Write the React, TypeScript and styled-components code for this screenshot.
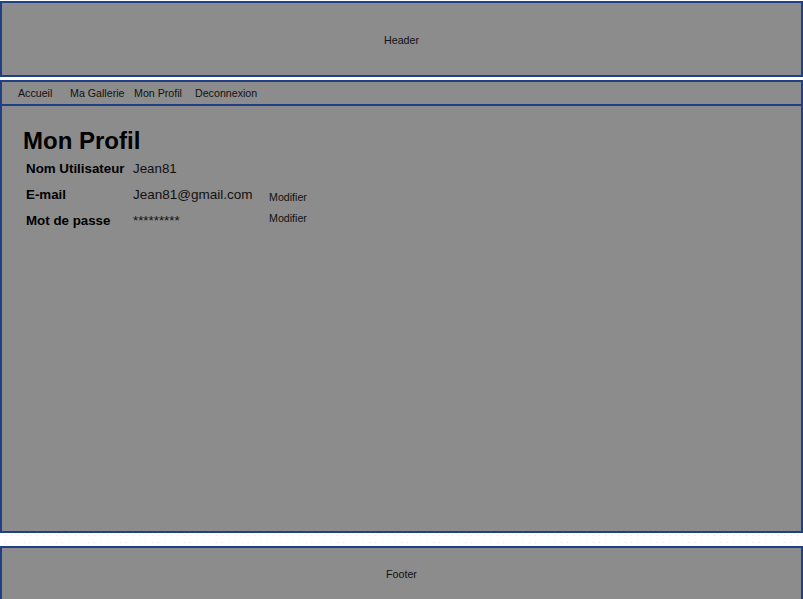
import React from 'react'
import styled, { createGlobalStyle } from 'styled-components'

const GlobalStyle = createGlobalStyle`
  html, body {
    margin: 0;
    padding: 0;
    background: #ffffff;
    font-family: "Liberation Sans", Arial, sans-serif;
  }
`

const Page = styled.div`
  width: 803px;
  padding-top: 1px;
  box-sizing: border-box;
`

const Box = styled.div`
  background: #8c8c8c;
  border: 2px solid #213f86;
  box-sizing: border-box;
  color: #111;
`

const Header = styled(Box)`
  height: 76px;
  display: flex;
  align-items: center;
  justify-content: center;
  padding-top: 2px;
  font-size: 10.67px;
`

const Nav = styled(Box)`
  margin-top: 3px;
  height: 24px;
  border-bottom: none;
  padding-left: 16px;
  display: grid;
  grid-template-columns: 52px 64px 61px auto;
  align-items: center;
  font-size: 10.67px;
  line-height: 22px;
`

const NavLink = styled.a`
  color: #111;
  text-decoration: none;
  white-space: nowrap;
  cursor: pointer;
`

const Main = styled(Box)`
  height: 429px;
  padding: 21px 21px 0;
`

const Title = styled.h1`
  margin: 0;
  font-size: 24px;
  line-height: 28px;
  font-weight: bold;
  color: #000;
`

const InfoGrid = styled.div`
  margin: 6px 0 0 3px;
  display: grid;
  grid-template-columns: 107px 136px auto;
  grid-template-rows: 26px 26px 16px;
  align-items: baseline;
  font-size: 13.33px;
  line-height: 16px;
`

const Label = styled.div`
  font-weight: bold;
  color: #000;
  white-space: nowrap;
`

const Value = styled.div<{ $wide?: boolean }>`
  color: #111;
  white-space: nowrap;
  font-size: ${p => (p.$wide ? '13.5px' : '13.33px')};
`

const Action = styled.a<{ $lift?: number }>`
  font-size: 10.67px;
  color: #111;
  text-decoration: none;
  cursor: pointer;
  position: relative;
  top: ${p => p.$lift ?? 0}px;
`

const Gap = styled.div`
  height: 13px;
  background-image: radial-gradient(circle, #e2e2e2 0.7px, transparent 0.9px);
  background-size: 6.4px 7px;
  background-position: 2px -1px;
`

const Footer = styled(Box)`
  height: 56px;
  display: flex;
  align-items: center;
  justify-content: center;
  font-size: 10.67px;
`

const App: React.FC = () => {
  return (
    <>
      <GlobalStyle />
      <Page>
        <Header>Header</Header>
        <Nav>
          <NavLink>Accueil</NavLink>
          <NavLink>Ma Gallerie</NavLink>
          <NavLink>Mon Profil</NavLink>
          <NavLink>Deconnexion</NavLink>
        </Nav>
        <Main>
          <Title>Mon Profil</Title>
          <InfoGrid>
            <Label>Nom Utilisateur</Label>
            <Value>Jean81</Value>
            <span />
            <Label>E-mail</Label>
            <Value $wide>Jean81@gmail.com</Value>
            <Action $lift={2}>Modifier</Action>
            <Label>Mot de passe</Label>
            <Value>*********</Value>
            <Action $lift={-3}>Modifier</Action>
          </InfoGrid>
        </Main>
        <Gap />
        <Footer>Footer</Footer>
      </Page>
    </>
  )
}

export default App
